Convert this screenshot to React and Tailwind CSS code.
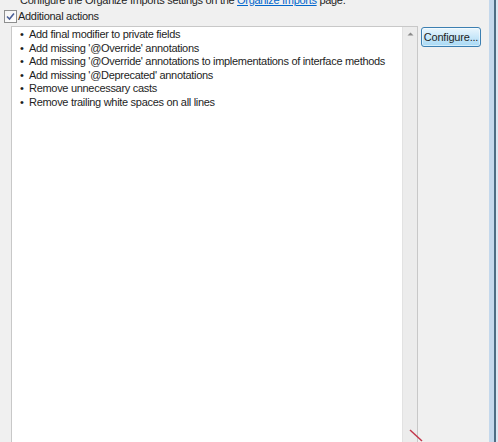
import React from 'react'

const actions = [
  'Add final modifier to private fields',
  "Add missing '@Override' annotations",
  "Add missing '@Override' annotations to implementations of interface methods",
  "Add missing '@Deprecated' annotations",
  'Remove unnecessary casts',
  'Remove trailing white spaces on all lines',
]

function CheckBox() {
  return (
    <span className="w-[13px] h-[13px] border border-[#8e8f8f] bg-gradient-to-br from-[#f4f4f4] to-[#ffffff] flex items-center justify-center">
      <svg width="9" height="9" viewBox="0 0 9 9">
        <path d="M1 4.5 L3.5 7 L8 1.5" fill="none" stroke="#4a5f97" strokeWidth="1.6" />
      </svg>
    </span>
  )
}

export default function App() {
  return (
    <div className="w-[498px] h-[442px] overflow-hidden bg-[#f0f0f0] flex text-[11px] tracking-[-0.3px] text-[#1e1e1e] font-['Liberation_Sans',sans-serif] relative">
      <div className="w-[489px] flex flex-col">
        <div className="pl-[20px] -mt-[7px] h-[12px] leading-[14px] whitespace-nowrap">
          Configure the Organize Imports settings on the{' '}
          <span className="text-[#0066cc] underline">Organize Imports</span> page.
        </div>
        <div className="pl-[4px] mt-[4px] flex items-center gap-[1px] h-[14px] leading-[14px]">
          <CheckBox />
          <span>Additional actions</span>
        </div>
        <div className="flex pl-[11px] mt-[3px] flex-1">
          <div className="w-[407px] border border-[#c8c8c8] bg-white flex h-[440px]">
            <ul className="flex-1 min-w-0 overflow-hidden pt-[1px] pl-[8px] leading-[13.5px]">
              {actions.map((a) => (
                <li key={a} className="flex whitespace-nowrap h-[13.5px]">
                  <span className="w-[9px]">•</span>
                  <span>{a}</span>
                </li>
              ))}
            </ul>
            <div className="w-[15px] shrink-0 bg-[#ececec] border-l border-[#e2e2e2] flex justify-center pt-[5px]">
              <svg width="7" height="4" viewBox="0 0 7 4">
                <path d="M0.5 3.5 L3.5 0.5 L6.5 3.5 Z" fill="#8a8a8a" />
              </svg>
            </div>
          </div>
          <div className="ml-[3px] mt-[1px]">
            <button className="w-[60px] h-[20px] rounded-[3px] border border-[#3c7fb1] bg-gradient-to-b from-[#eaf6fd] to-[#a7d9f5] text-[11px] tracking-[-0.2px] leading-[16px] flex items-center justify-center shadow-[inset_0_0_0_1px_#ffffff80]">
              Configure...
            </button>
          </div>
        </div>
      </div>
      <div className="flex">
        <div className="w-[5px] bg-[#c4d8ec]" />
        <div className="w-[2px] bg-[#4d6d84]" />
        <div className="w-[2px] bg-[#dce8f3]" />
      </div>
      <svg className="absolute left-[408px] top-[428px]" width="16" height="14" viewBox="0 0 16 14">
        <path d="M2 2 L14 13" stroke="#c2364a" strokeWidth="1.5" />
      </svg>
    </div>
  )
}
